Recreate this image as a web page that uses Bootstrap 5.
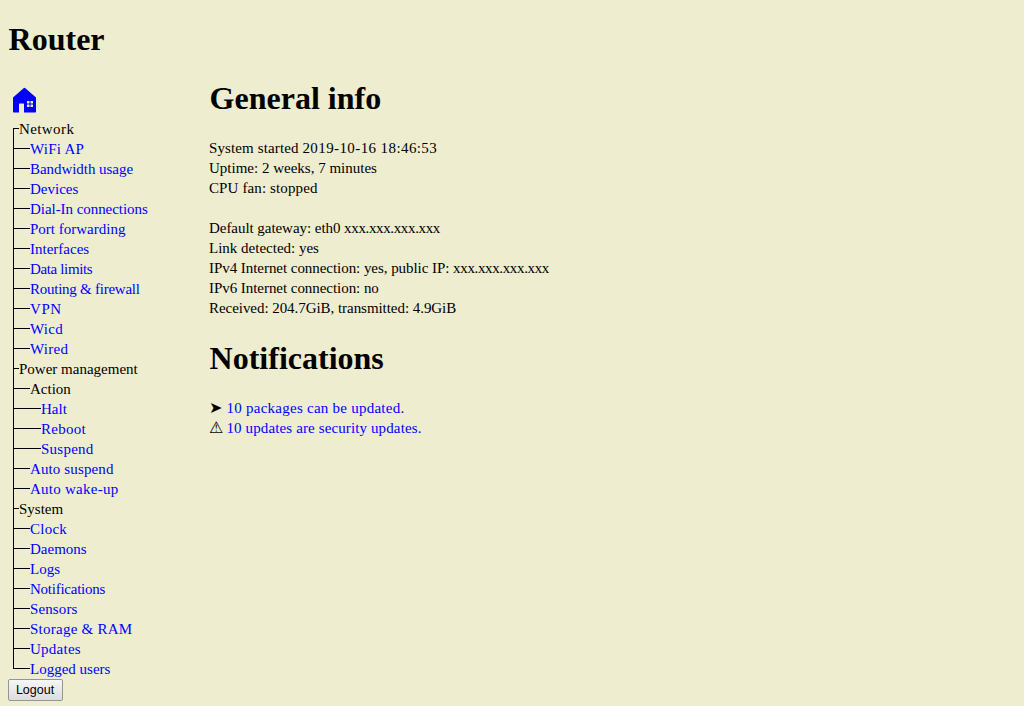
<!DOCTYPE html>
<html lang="en">
<head>
<meta charset="utf-8">
<meta name="viewport" content="width=device-width, initial-scale=1">
<title>Router</title>
<link href="https://cdn.jsdelivr.net/npm/bootstrap@5.3.0/dist/css/bootstrap.min.css" rel="stylesheet">
<style>
body{background:#eeedd0;color:#000;font:15px/20px "Liberation Serif",serif;font-variant-ligatures:none}
h1,h2{font-size:32px;font-weight:700;line-height:37px;margin:0;padding-left:.6px;color:#000}
h1{margin-bottom:22px}
a{color:#00f;text-decoration:none}
a:hover{text-decoration:underline}
.page{padding:21px 8px 0}
.sidebar{width:201px;padding-top:1px}
.home{width:34px;height:38px}
.tree{margin-left:5px;background:linear-gradient(#000,#000) 0 9px/1px 541px no-repeat}
.tree li{height:20px;white-space:nowrap}
.tree li::before{content:"";width:6px;height:1px;background:#000;margin-top:9px;flex:none}
.tree .lv1::before{width:17px}
.tree .lv2::before{width:28px}
.logout{width:55px;height:22px;padding:0 1px 0 0;border:1px solid #959595;border-radius:2px;background:linear-gradient(#f7f7f7,#dcdcdc);color:#000;font:12.5px/20px "Liberation Sans",sans-serif}
.info{margin-bottom:21px}
.notes{margin-top:22px}
.wide1{letter-spacing:.12px}
.wide2{letter-spacing:.25px}
.wide3{letter-spacing:.4px}
.wide4{letter-spacing:.6px}
.tight1{letter-spacing:-.05px}
.tight2{letter-spacing:-.25px}
.tight3{letter-spacing:-.36px}
.sign{display:inline-block;width:17.5px;height:20px;font-size:16px;line-height:20px;vertical-align:top}
</style>
</head>
<body>
<div class="page">
  <h1>Router</h1>
  <div class="d-flex align-items-start">
    <nav class="sidebar">
      <a href="#" class="home d-block" aria-label="Home">
        <svg class="d-block" width="34" height="34" viewBox="0 0 34 34" fill="#00f"><path fill-rule="evenodd" d="M15.6 7.2Q16.5 6.3 17.4 7.2L28 16.5V30.7Q28 31.4 27.3 31.4H16V23Q16 22.5 15.5 22.5H11.5Q11 22.5 11 23V31.4H5.8Q5 31.4 5 30.7V16.5Z"/><path fill="#eeedd0" d="M19 20h2.5v2.5H19zM22.5 20H25v2.5h-2.5zM19 23.5h2.5V26H19zM22.5 23.5H25V26h-2.5z"/></svg>
      </a>
      <ul class="tree list-unstyled mb-0">
        <li class="d-flex wide3">Network</li>
        <li class="d-flex lv1 wide2"><a href="#">WiFi AP</a></li>
        <li class="d-flex lv1 tight1"><a href="#">Bandwidth usage</a></li>
        <li class="d-flex lv1"><a href="#">Devices</a></li>
        <li class="d-flex lv1 tight1"><a href="#">Dial-In connections</a></li>
        <li class="d-flex lv1"><a href="#">Port forwarding</a></li>
        <li class="d-flex lv1"><a href="#">Interfaces</a></li>
        <li class="d-flex lv1 tight3"><a href="#">Data limits</a></li>
        <li class="d-flex lv1 tight2"><a href="#">Routing &amp; firewall</a></li>
        <li class="d-flex lv1 wide4"><a href="#">VPN</a></li>
        <li class="d-flex lv1 wide2"><a href="#">Wicd</a></li>
        <li class="d-flex lv1 wide2"><a href="#">Wired</a></li>
        <li class="d-flex">Power management</li>
        <li class="d-flex lv1">Action</li>
        <li class="d-flex lv2"><a href="#">Halt</a></li>
        <li class="d-flex lv2 wide2"><a href="#">Reboot</a></li>
        <li class="d-flex lv2 wide2"><a href="#">Suspend</a></li>
        <li class="d-flex lv1 wide1"><a href="#">Auto suspend</a></li>
        <li class="d-flex lv1 wide2"><a href="#">Auto wake-up</a></li>
        <li class="d-flex">System</li>
        <li class="d-flex lv1 wide2"><a href="#">Clock</a></li>
        <li class="d-flex lv1"><a href="#">Daemons</a></li>
        <li class="d-flex lv1"><a href="#">Logs</a></li>
        <li class="d-flex lv1 tight2"><a href="#">Notifications</a></li>
        <li class="d-flex lv1 wide1"><a href="#">Sensors</a></li>
        <li class="d-flex lv1 wide2"><a href="#">Storage &amp; RAM</a></li>
        <li class="d-flex lv1 wide2"><a href="#">Updates</a></li>
        <li class="d-flex lv1"><a href="#">Logged users</a></li>
      </ul>
      <button class="logout d-block" type="button">Logout</button>
    </nav>
    <main>
      <h2 class="info">General info</h2>
      <div><span class="wide1">System started </span><span class="wide3">2019-10-16 18:46:53</span></div>
      <div>Uptime: 2 weeks, 7 minutes</div>
      <div class="wide1">CPU fan: stopped</div>
      <br>
      <div><span class="tight1">Default gateway: eth0 </span><span class="tight3">xxx.xxx.xxx.xxx</span></div>
      <div>Link detected: yes</div>
      <div><span class="tight1">IPv4 Internet connection: yes, public IP: </span><span class="tight3">xxx.xxx.xxx.xxx</span></div>
      <div class="tight1">IPv6 Internet connection: no</div>
      <div class="tight1">Received: 204.7GiB, transmitted: 4.9GiB</div>
      <h2 class="info notes">Notifications</h2>
      <div><span class="sign">➤</span><a href="#" class="wide2">10 packages can be updated.</a></div>
      <div><span class="sign">⚠</span><a href="#" class="wide1">10 updates are security updates.</a></div>
    </main>
  </div>
</div>
<script src="https://cdn.jsdelivr.net/npm/bootstrap@5.3.0/dist/js/bootstrap.bundle.min.js"></script>
</body>
</html>
